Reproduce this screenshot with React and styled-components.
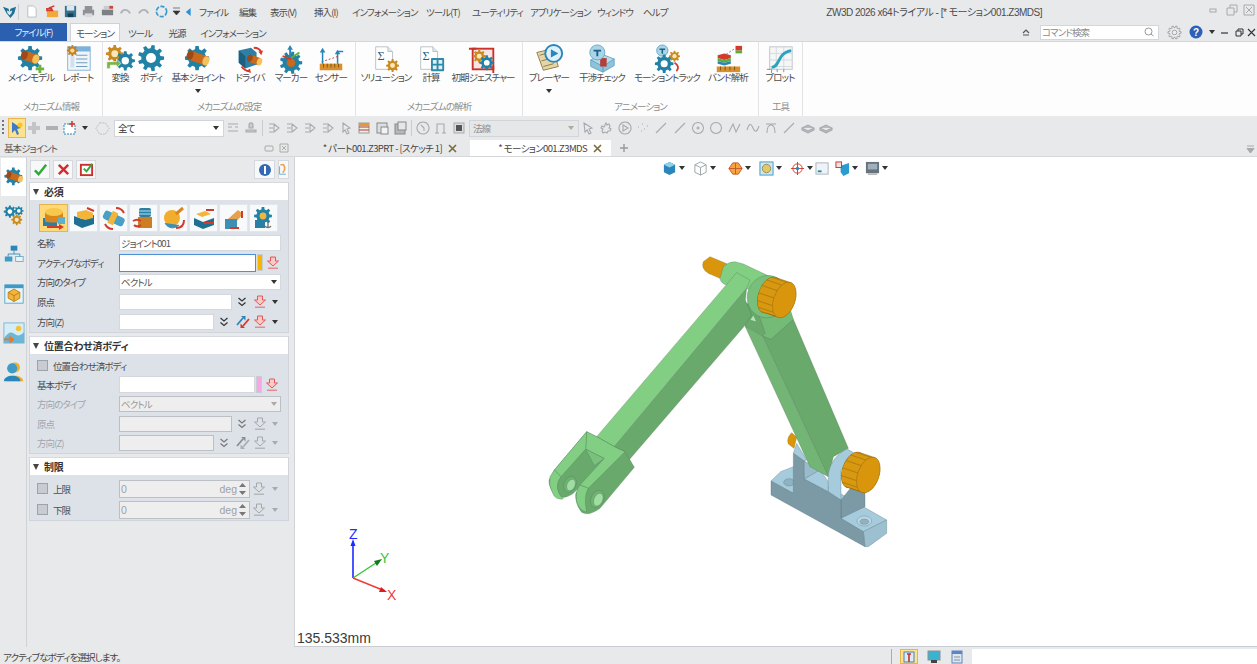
import React from "react";
import styled, { createGlobalStyle } from "styled-components";

const Global = createGlobalStyle`
  html, body { margin: 0; padding: 0; height: 100%; overflow: hidden; }
  body {
    font-family: "Noto Sans CJK JP", "Noto Sans", sans-serif;
    font-feature-settings: "palt";
    font-size: 9.5px;
    letter-spacing: -0.9px;
    color: #4c4c4c;
    background: #e8e9eb;
  }
  svg text { letter-spacing: 0; }
`;

const Page = styled.div`
  width: 1257px;
  height: 664px;
  display: flex;
  flex-direction: column;
  overflow: hidden;
`;

/* ---------- title bar ---------- */
const TitleBar = styled.div`
  height: 23px;
  display: flex;
  align-items: center;
  background: #e8e9eb;
`;
const Quick = styled.div`
  display: flex;
  align-items: center;
  width: 199px;
  flex: none;
`;
const Slot = styled.span`
  width: ${(p) => p.$w || 18}px;
  flex: none;
  display: flex;
  align-items: center;
  justify-content: center;
`;
const MenuBar = styled.nav`
  display: flex;
  white-space: nowrap;
`;
const MenuItem = styled.span`
  width: ${(p) => p.$w}px;
  flex: none;
`;
const WindowTitle = styled.div`
  margin-left: auto;
  margin-right: 215px;
  font-size: 10px;
  letter-spacing: -0.5px;
  white-space: nowrap;
  font-family: "Liberation Sans", "Noto Sans CJK JP", sans-serif;
`;
const WinControls = styled.div`
  position: absolute;
  right: 0;
  top: 4px;
  display: flex;
`;

/* ---------- ribbon tabs ---------- */
const TabStrip = styled.div`
  height: 18px;
  display: flex;
  align-items: stretch;
  background: #e8e9eb;
`;
const FileTab = styled.div`
  width: 67px;
  background: #2b5fb0;
  color: #e6eefa;
  display: flex;
  align-items: center;
  justify-content: center;
  margin-right: 3px;
`;
const RibbonTab = styled.div`
  width: ${(p) => p.$w}px;
  display: flex;
  align-items: center;
  justify-content: center;
  white-space: nowrap;
  background: ${(p) => (p.$active ? "#fdfdfd" : "transparent")};
  border: 1px solid ${(p) => (p.$active ? "#cfd2d6" : "transparent")};
  border-bottom: 0;
  box-sizing: border-box;
`;
const TabTools = styled.div`
  margin-left: auto;
  display: flex;
  align-items: center;
  height: 18px;
`;
const SearchBox = styled.div`
  width: 119px;
  height: 15px;
  background: #fff;
  border: 1px solid #d3d6da;
  display: flex;
  align-items: center;
  justify-content: space-between;
  padding: 0 4px 0 1px;
  box-sizing: border-box;
  color: #8a8a8a;
  margin: 0 6px 0 9px;
`;

/* ---------- ribbon ---------- */
const Ribbon = styled.div`
  height: 74px;
  display: flex;
  background: #fdfdfd;
  border-top: 1px solid #d3d6da;
  border-bottom: 1px solid #c5c9ce;
  box-sizing: content-box;
  margin-bottom: -1px;
`;
const Group = styled.section`
  width: ${(p) => p.$w}px;
  flex: none;
  box-sizing: border-box;
  border-right: 1px solid #e2e4e7;
  display: flex;
  flex-direction: column;
  padding-left: ${(p) => p.$pad}px;
`;
const GroupButtons = styled.div`
  display: flex;
  flex: 1;
`;
const GroupLabel = styled.div`
  height: 17px;
  margin-left: ${(p) => -p.$pad}px;
  text-align: center;
  color: #8d8d8d;
  line-height: 15px;
`;
const RibbonButton = styled.div`
  width: ${(p) => p.$w}px;
  flex: none;
  display: flex;
  flex-direction: column;
  align-items: center;
  padding-top: 2px;
  white-space: nowrap;
  line-height: 13px;
  svg { margin-bottom: -3px; }
`;
const Caret = styled.i`
  display: block;
  width: 0;
  height: 0;
  margin-top: ${(p) => (p.$flat ? 0 : 5)}px;
  border-left: 3px solid transparent;
  border-right: 3px solid transparent;
  border-top: 4px solid ${(p) => p.$c || "#333"};
`;

/* ---------- toolbar ---------- */
const Toolbar = styled.div`
  height: 24px;
  display: flex;
  align-items: center;
  background: #e8e9eb;
  padding-left: 2px;
`;
const Grip = styled.span`
  width: 2px;
  height: 16px;
  margin-right: 4px;
  background: repeating-linear-gradient(#777 0 2px, transparent 2px 4px);
`;
const Selected = styled.span`
  width: 16px;
  height: ${(p) => p.$h || 18}px;
  background: #fde28f;
  border: 1px solid #e9b44c;
  box-sizing: content-box;
  display: flex;
  align-items: center;
  justify-content: center;
  flex: none;
  margin-right: ${(p) => p.$mr || 0}px;
`;
const Combo = styled.div`
  width: ${(p) => p.$w}px;
  height: 17px;
  box-sizing: border-box;
  flex: none;
  background: ${(p) => (p.$off ? "#e6e7e8" : "#fff")};
  border: 1px solid #d2d4d7;
  display: flex;
  align-items: center;
  justify-content: space-between;
  padding: 0 4px 0 3px;
  color: ${(p) => (p.$off ? "#8f8f8f" : "#333")};
  margin-left: ${(p) => p.$ml || 0}px;
`;
const Sep = styled.span`
  width: 1px;
  height: 16px;
  background: #c8cbcf;
  margin: 0 ${(p) => p.$m ?? 2}px;
  flex: none;
`;

/* ---------- document tabs ---------- */
const DocRow = styled.div`
  height: 17px;
  display: flex;
  align-items: stretch;
  background: #e8e9eb;
  border-bottom: 1px solid #d6d8db;
  box-sizing: border-box;
`;
const PanelTitle = styled.div`
  width: 290px;
  padding-left: 4px;
  box-sizing: border-box;
  display: flex;
  align-items: center;
  justify-content: space-between;
  color: #555;
  flex: none;
`;
const PanelTitleTools = styled.div`
  display: flex;
  gap: 5px;
  margin-right: 1px;
`;
const DocTab = styled.div`
  width: ${(p) => p.$w}px;
  flex: none;
  margin-left: ${(p) => p.$ml}px;
  background: ${(p) => (p.$active ? "#fff" : "transparent")};
  display: flex;
  align-items: center;
  justify-content: flex-end;
  gap: 6px;
  padding-right: 9px;
  box-sizing: border-box;
  white-space: nowrap;
  letter-spacing: -0.6px;
  color: #444;
`;
const DocTabsEnd = styled.div`
  margin-left: auto;
  padding: 5px 2px 0 0;
`;

/* ---------- main ---------- */
const Main = styled.div`
  flex: 1;
  display: flex;
  min-height: 0;
`;
const SideStrip = styled.aside`
  width: 26px;
  flex: none;
  display: flex;
  flex-direction: column;
  align-items: stretch;
  padding-top: 1px;
  background: #e8e9eb;
  border-right: 1px solid #cfd3d8;
  box-sizing: content-box;
`;
const SideTab = styled.div`
  height: ${(p) => p.$h}px;
  display: flex;
  align-items: center;
  justify-content: center;
  background: ${(p) => (p.$active ? "#fff" : "transparent")};
  margin-left: 1px;
`;
const Panel = styled.div`
  width: 263px;
  flex: none;
  display: flex;
  flex-direction: column;
  padding: 2px 1px 0 2px;
  box-sizing: border-box;
  background: #e8e9eb;
`;
const ActionRow = styled.div`
  display: flex;
  height: 21px;
  gap: 3px;
  align-items: center;
  padding-left: 1px;
  margin-bottom: 2px;
`;
const ActionButton = styled.div`
  width: ${(p) => p.$w || 20}px;
  height: 19px;
  background: #f7f8f9;
  border: 1px solid #d5d8dc;
  box-sizing: border-box;
  display: flex;
  align-items: center;
  justify-content: center;
  margin-left: ${(p) => (p.$auto ? "auto" : "0")};
`;
const Section = styled.section`
  background: #dde2e9;
  border: 1px solid #d0d5db;
  border-top: 0;
  margin-bottom: 3px;
  box-sizing: border-box;
`;
const SectionHead = styled.header`
  height: 18px;
  background: #fff;
  border-top: 1px solid #d6d9dd;
  box-sizing: border-box;
  display: flex;
  align-items: center;
  gap: 5px;
  padding-left: 3px;
  font-weight: 700;
  color: #333;
  font-size: 10px;
  letter-spacing: -0.2px;
`;
const Triangle = styled.i`
  width: 0;
  height: 0;
  border-left: 3.5px solid transparent;
  border-right: 3.5px solid transparent;
  border-top: 6px solid #444;
`;
const SectionBody = styled.div`
  padding: ${(p) => p.$top ?? 2}px 0 ${(p) => p.$bottom ?? 0}px 7px;
`;
const JointRow = styled.div`
  display: flex;
  gap: 1px;
  height: 29px;
  margin-left: 2px;
`;
const JointButton = styled.div`
  width: 29px;
  height: 28px;
  box-sizing: border-box;
  display: flex;
  align-items: center;
  justify-content: center;
  background: ${(p) => (p.$on ? "#fdd97c" : "#f8f9fa")};
  border: 1px solid ${(p) => (p.$on ? "#e9b44c" : "#e4e7ea")};
`;
const Row = styled.div`
  height: ${(p) => p.$h || 19.75}px;
  display: flex;
  align-items: center;
  color: ${(p) => (p.$off ? "#a2a6ab" : "#4c4c4c")};
`;
const FieldLabel = styled.label`
  width: ${(p) => p.$w || 82}px;
  flex: none;
  white-space: nowrap;
`;
const Input = styled.div`
  width: ${(p) => p.$w}px;
  height: ${(p) => p.$hh || 16}px;
  flex: none;
  box-sizing: border-box;
  background: ${(p) => (p.$off ? "#eeeeef" : "#fff")};
  border: 1px solid ${(p) => (p.$focus ? "#4a90d9" : p.$off ? "#bcc0c5" : "#d4d8dd")};
  display: flex;
  align-items: center;
  justify-content: space-between;
  padding: 0 3px 0 1px;
  color: ${(p) => (p.$off ? "#9a9a9a" : "#555")};
`;
const Swatch = styled.span`
  width: 6px;
  height: 17px;
  margin-left: 1px;
  background: ${(p) => p.$c};
  border: 1px solid #c9ccd1;
  box-sizing: border-box;
  flex: none;
`;
const Check = styled.span`
  width: 11px;
  height: 11px;
  box-sizing: border-box;
  background: #c8ccd2;
  border: 1px solid #9ea3a9;
  flex: none;
  margin-right: 5px;
`;
const UnitInput = styled(Input)`
  height: 18px;
  font-family: "Liberation Sans", sans-serif;
  font-size: 10.5px;
  letter-spacing: 0;
  color: #a0a0a0;
`;
const UnitRight = styled.span`
  display: flex;
  align-items: center;
  gap: 2px;
`;

const Canvas = styled.main`
  flex: 1;
  position: relative;
  background: #fff;
  margin-left: 4px;
  border-left: 1px solid #d0d3d7;
  border-bottom: 1px solid #c9ccd0;
  box-sizing: border-box;
`;
const ViewBar = styled.div`
  display: flex;
  justify-content: center;
  align-items: center;
  height: 22px;
`;
const ViewItem = styled.span`
  display: flex;
  align-items: center;
  gap: 2px;
  width: ${(p) => p.$w}px;
`;
const Scale = styled.div`
  position: absolute;
  left: 2px;
  bottom: 0;
  font-family: "Liberation Sans", sans-serif;
  font-size: 14px;
  letter-spacing: 0;
  line-height: 16px;
  color: #3a3a3a;
`;
const ModelLayer = styled.svg`
  position: absolute;
  left: 235px;
  top: 83px;
`;
const AxisLayer = styled.svg`
  position: absolute;
  left: 40px;
  top: 363px;
`;

const StatusBar = styled.footer`
  height: 17px;
  display: flex;
  align-items: flex-end;
  background: #e8e9eb;
  color: #444;
`;
const StatusText = styled.div`
  width: 891px;
  padding-left: 3px;
  box-sizing: border-box;
  flex: none;
  line-height: 14px;
  white-space: nowrap;
`;
const StatusIcons = styled.div`
  width: 81px;
  height: 15px;
  display: flex;
  align-items: center;
  gap: 9px;
  border-left: 1px solid #a9adb2;
  padding-left: 8px;
  box-sizing: border-box;
  flex: none;
`;
const StatusBox = styled.div`
  flex: 1;
  height: 15px;
  background: #fff;
`;

/* ---------- drawing helpers ---------- */
const gearPath = (cx, cy, R, n = 8) => {
  const r = R * 0.74;
  const step = (Math.PI * 2) / n;
  let d = "";
  for (let i = 0; i < n; i++) {
    const a = i * step;
    const pts = [
      [r, a - step * 0.3],
      [R, a - step * 0.18],
      [R, a + step * 0.18],
      [r, a + step * 0.3],
    ];
    pts.forEach(([q, t], k) => {
      const x = (cx + q * Math.cos(t)).toFixed(1);
      const y = (cy + q * Math.sin(t)).toFixed(1);
      d += `${i === 0 && k === 0 ? "M" : "L"}${x} ${y} `;
    });
  }
  return d + "Z";
};
const Gear = ({ x, y, R, c = "#2282a6", hole = "#fff", n = 8 }) => (
  <g>
    <path d={gearPath(x, y, R, n)} fill={c} />
    <circle cx={x} cy={y} r={R * 0.38} fill={hole} />
  </g>
);
const Cyl = ({ x, y, l = 12, r = 4 }) => (
  <g transform={`rotate(20 ${x} ${y})`}>
    <rect x={x - l / 2} y={y - r} width={l} height={r * 2} fill="#c9691e" />
    <ellipse cx={x + l / 2} cy={y} rx={r * 0.7} ry={r} fill="#f3c25a" />
    <ellipse cx={x - l / 2} cy={y} rx={r * 0.7} ry={r} fill="#9c4a17" />
  </g>
);
const S = ({ s = 30, v = 32, children }) => (
  <svg width={s} height={s} viewBox={`0 0 ${v} ${v}`} style={{ display: "block", flex: "none" }}>
    {children}
  </svg>
);
const DocSigma = ({ x = 5 }) => (
  <g>
    <path d={`M${x} 3h13l5 5v19h-18z`} fill="#fff" stroke="#b7c0c8" />
    <path d={`M${x + 13} 3v5h5`} fill="#dfe6ea" stroke="#b7c0c8" />
    <text x={x + 2} y="17" fontSize="13" fontFamily="Liberation Serif, serif" fill="#1f5f86">Σ</text>
  </g>
);

const ribbonIcons = {
  main: (
    <S>
      <Gear x={15} y={15} R={13} hole="#2282a6" />
      <Cyl x={15} y={14} l={13} r={5} />
      <path d="M24 22h3v3h3v3h-3v3h-3v-3h-3v-3h3z" fill="#6fb33f" />
    </S>
  ),
  report: (
    <S>
      <rect x="5" y="3" width="24" height="25" fill="#eef5fb" stroke="#8cb3d3" />
      <rect x="5" y="3" width="24" height="5" fill="#7cb2de" />
      <path d="M14 12h12M14 16h12M14 20h12M14 24h12" stroke="#6c95b5" />
      <rect x="8" y="11" width="4" height="14" fill="#cfe0ee" />
      <Gear x={10} y={7} R={6} c="#c97f1c" hole="#f5d9a0" />
    </S>
  ),
  convert: (
    <S v={34}>
      <Gear x={11} y={11} R={10} c="#c98a1f" hole="#fbe6b5" />
      <Gear x={23} y={19} R={11} />
      <path d="M2 20h11v-3l5 5-5 5v-3H6v4H2z" fill="#7eb24a" stroke="#fff" strokeWidth=".8" />
    </S>
  ),
  body: (
    <S>
      <Gear x={16} y={15} R={14} n={9} />
    </S>
  ),
  joint: (
    <S>
      <Gear x={15} y={15} R={13} hole="#2282a6" />
      <Cyl x={16} y={15} l={18} r={5} />
    </S>
  ),
  driver: (
    <S>
      <path d="M4 7l13-3 6 5v13l-12 4-7-6z" fill="#2d7fa5" />
      <path d="M4 7l7 6v13l-7-6z" fill="#1d5f80" />
      <Cyl x={21} y={17} l={11} r={4} />
      <path d="M20 4c4 0 7 2 8 5M7 24c2 3 5 5 9 5" stroke="#d33a2c" strokeWidth="2" fill="none" />
      <path d="M28 12l2-5-5 1zM17 31l-1-5-4 3z" fill="#d33a2c" />
    </S>
  ),
  marker: (
    <S>
      <Gear x={16} y={20} R={12} n={9} hole="#c9691e" />
      <path d="M15 16V3" stroke="#2a86b8" strokeWidth="2" />
      <path d="M12 6l3-5 3 5z" fill="#2a86b8" />
      <path d="M16 15l9-6" stroke="#5cae3c" strokeWidth="2" />
      <path d="M16 16l-9-3" stroke="#d33a2c" strokeWidth="2" />
    </S>
  ),
  sensor: (
    <S>
      <rect x="4" y="21" width="24" height="7" fill="#d98f2b" />
      <path d="M8 21v4M12 21v4M16 21v4M20 21v4M24 21v4" stroke="#7d5418" />
      <path d="M7 21V6M23 21V8h6" stroke="#2a86b8" strokeWidth="1.6" fill="none" />
      <path d="M4 9l3-5 3 5zM20 11l3-5 3 5z" fill="#2a86b8" />
      <path d="M6 19l18-6" stroke="#d33a2c" strokeDasharray="2 2" />
    </S>
  ),
  solution: (
    <S>
      <DocSigma />
      <Gear x={23} y={23} R={7} c="#c98a1f" hole="#fbe6b5" />
    </S>
  ),
  calc: (
    <S>
      <DocSigma />
      <rect x="16" y="15" width="14" height="14" rx="1" fill="#2e8aa8" />
      <path d="M18 17h4v4h-4zM24 17h4v4h-4zM18 23h4v4h-4zM24 23h4v4h-4z" fill="#dcf0f6" />
    </S>
  ),
  gesture: (
    <S>
      <rect x="5" y="5" width="22" height="22" fill="#f9e5e1" stroke="#c8322a" strokeWidth="2" />
      <path d="M1 5h8M27 23v8" stroke="#c8322a" strokeWidth="2" />
      <Gear x={12} y={13} R={7} c="#c98a1f" hole="#fbe6b5" />
      <Gear x={20} y={20} R={8} />
    </S>
  ),
  player: (
    <S>
      <path d="M3 9l17-4 6 19-16 4z" fill="#e6d6a6" stroke="#8a7a4c" />
      <path d="M6 12l11-3M8 18l11-3M10 24l11-3" stroke="#8a7a4c" />
      <circle cx="21" cy="10" r="9" fill="#dff2fb" stroke="#2a86b8" strokeWidth="2" />
      <path d="M18 5.500l8 4.500-8 4.500z" fill="#2a86b8" />
    </S>
  ),
  check: (
    <S>
      <path d="M4 17l12-6 13 5-12 8z" fill="#b6dcec" stroke="#6aa7c4" />
      <path d="M4 17v7l13 6v-6zM17 24l12-8v7l-12 7z" fill="#8fc3da" stroke="#6aa7c4" />
      <rect x="14" y="15" width="7" height="9" fill="#b33f3a" />
      <circle cx="11" cy="9" r="8" fill="#a9d5e8" stroke="#6aa7c4" />
      <path d="M7 7h8M11 7v6" stroke="#1f5f86" strokeWidth="2" />
    </S>
  ),
  track: (
    <S>
      <circle cx="11" cy="7" r="6" fill="#a9d5e8" stroke="#6aa7c4" />
      <path d="M8 5.500h6M11 5.500v5" stroke="#1f5f86" strokeWidth="1.6" />
      <Gear x={13} y={21} R={10} />
      <Gear x={24} y={13} R={6} c="#c98a1f" hole="#fbe6b5" />
      <path d="M24 20c4 2 5 6 2 9" stroke="#d33a2c" strokeWidth="2" fill="none" />
    </S>
  ),
  band: (
    <S>
      <rect x="4" y="24" width="25" height="6" fill="#d98f2b" />
      <path d="M8 24v4M13 24v4M18 24v4M23 24v4" stroke="#7d5418" />
      <path d="M5 12l7-2 7 2v3l-7 2-7-2z" fill="#d33a2c" />
      <path d="M5 15l7 2 7-2v3l-7 2-7-2z" fill="#5cae3c" />
      <path d="M5 18l7 2 7-2v3l-7 2-7-2z" fill="#2a86b8" />
      <rect x="24" y="2" width="7" height="5" fill="#d33a2c" />
      <rect x="24" y="7" width="7" height="3" fill="#5cae3c" />
      <path d="M14 11l9-6" stroke="#777" strokeDasharray="2 2" />
    </S>
  ),
  plot: (
    <S>
      <rect x="5" y="3" width="24" height="24" fill="#f4f6f7" stroke="#c0c5ca" />
      <path d="M5 10h24M5 17h24M5 24h24M12 3v24M20 3v24" stroke="#d5d9dc" />
      <path d="M7 25c9 0 6-16 21-18" stroke="#2ba3bd" strokeWidth="3" fill="none" />
      <path d="M2 27h4M7 27v4M13 27v3M20 27v3" stroke="#888" />
    </S>
  ),
};

const Pick = ({ off }) => (
  <S s={14} v={14}>
    <path d="M4.500 1h5v4h3L7 10 1.500 5h3z" fill={off ? "#dfe2e5" : "#f9c9c6"} stroke={off ? "#a3a8ad" : "#e0585a"} />
    <path d="M2 11.500h10v1.500H2z" fill={off ? "#b4b8bd" : "#e8898a"} />
  </S>
);
const DoubleDown = ({ off }) => (
  <S s={10} v={10}>
    <path d="M1.500 1l3.500 3 3.500-3M1.500 5.500l3.500 3 3.500-3" stroke={off ? "#777" : "#333"} strokeWidth="1.2" fill="none" />
  </S>
);
const Flip = ({ off }) => (
  <S s={14} v={14}>
    <path d="M1 10L7 3" stroke={off ? "#8a8f94" : "#2a86b8"} strokeWidth="1.8" />
    <path d="M5 1h4.500v4.500z" fill={off ? "#8a8f94" : "#2a86b8"} />
    <path d="M13 4l-6 7" stroke={off ? "#a9aeb3" : "#d33a2c"} strokeWidth="1.8" />
    <path d="M4.500 8.500V13H9z" fill={off ? "#a9aeb3" : "#d33a2c"} />
  </S>
);
const Spin = () => (
  <svg width="7" height="14" viewBox="0 0 7 14" style={{ display: "block" }}>
    <path d="M0 5l3.500-4L7 5zM0 9l3.500 4L7 9z" fill="#777" />
  </svg>
);

const GrayTool = ({ d, fill = "none" }) => (
  <S s={14} v={14}>
    <path d={d} stroke="#a6aaae" strokeWidth="1.1" fill={fill} />
  </S>
);

const jointIcons = [
  <S s={24} v={24} key="0">
    <rect x="1" y="12" width="14" height="8" fill="#2a7fa5" />
    <path d="M3 6v9c0 2 18 2 18 0V6" fill="#d9861f" />
    <ellipse cx="12" cy="6" rx="9" ry="4" fill="#f7c84a" />
    <rect x="16" y="11" width="7" height="7" fill="#5fb0cf" />
    <path d="M5 21h14" stroke="#d33a2c" strokeWidth="2" />
    <path d="M22 21l-5-3v6z" fill="#d33a2c" />
  </S>,
  <S s={24} v={24} key="1">
    <path d="M2 10l8 3v9l-8-4zM10 13l12-4v9l-12 4z" fill="#1f6f93" />
    <path d="M5 6l9-2 7 3v5l-8 2-8-3z" fill="#f2b53a" />
    <path d="M15 2l7 3" stroke="#d33a2c" strokeWidth="2" />
  </S>,
  <S s={24} v={24} key="2">
    <g transform="rotate(25 12 12)">
      <rect x="1" y="8" width="22" height="9" rx="3" fill="#4aa0c4" />
      <rect x="8" y="6" width="6" height="13" fill="#f2b53a" />
    </g>
    <path d="M3 18c2 4 5 5 8 5M14 2c3 0 6 1 8 5" stroke="#d33a2c" strokeWidth="2" fill="none" />
  </S>,
  <S s={24} v={24} key="3">
    <rect x="7" y="2" width="12" height="9" rx="2" fill="#2a7fa5" />
    <path d="M7 5h12M7 8h12" stroke="#bfe0ee" />
    <rect x="6" y="11" width="14" height="11" fill="#cd7d22" />
    <path d="M1 15c3-2 5-2 8 0M9 19c-3 2-5 2-7 0" stroke="#d33a2c" strokeWidth="2" fill="none" />
  </S>,
  <S s={24} v={24} key="4">
    <circle cx="10" cy="12" r="8" fill="#f0ad2e" />
    <path d="M14 8l7-6" stroke="#d9861f" strokeWidth="3" />
    <path d="M3 17c3 6 10 6 14 2" fill="#3d8fb3" stroke="#3d8fb3" />
    <path d="M14 22c5 0 8-3 8-8" stroke="#d33a2c" strokeWidth="2" fill="none" />
  </S>,
  <S s={24} v={24} key="5">
    <path d="M2 12l9 4v7l-9-4zM11 16l11-4v7l-11 4z" fill="#1f6f93" />
    <path d="M4 8l9-3 6 3-9 3z" fill="#f2b53a" />
    <path d="M14 4h8M12 17h10" stroke="#d33a2c" strokeWidth="2" />
  </S>,
  <S s={24} v={24} key="6">
    <path d="M6 13l10-9 5 4-7 8z" fill="#e6a14f" />
    <rect x="3" y="13" width="12" height="10" fill="#3d8fb3" />
    <path d="M17 22h-9M20 12V5" stroke="#d33a2c" strokeWidth="2" />
  </S>,
  <S s={24} v={24} key="7">
    <Gear x={11} y={10} R={9} hole="#f2b53a" />
    <rect x="3" y="14" width="10" height="8" fill="#2a7fa5" />
    <path d="M16 16v6M13 20c1 2 5 2 6 0" stroke="#777" strokeWidth="1.4" fill="none" />
  </S>,
];

/* the assembly is drawn in a 3x grid, so the numbers read off a zoomed view */
const ORANGE = "#d9950c";
const LIGHT = "#82cf84";
const DARK = "#69a96c";
const STEEL = "#7c99a6";
const ICE = "#a6cbdc";

const Knob = ({ x, y }) => {
  const rx = 32;
  const ry = 56;
  const dx = -45;
  const dy = -15;
  const ang = (20 * Math.PI) / 180;
  const rim = (deg, ox = 0, oy = 0) => {
    const t = (deg * Math.PI) / 180;
    const ex = rx * Math.cos(t);
    const ey = ry * Math.sin(t);
    return [x + ex * Math.cos(ang) - ey * Math.sin(ang) + ox, y + ex * Math.sin(ang) + ey * Math.cos(ang) + oy];
  };
  const steps = [1, 0.75, 0.5, 0.25, 0];
  const teeth = [75, 100, 125, 150, 175, 200, 225, 250, 275];
  return (
    <g>
      <ellipse cx={x + dx} cy={y + dy} rx={rx + 1} ry={ry + 1} transform={`rotate(20 ${x + dx} ${y + dy})`} fill="#7a5a10" stroke="none" />
      {steps.map((k) => (
        <ellipse key={k} cx={x + dx * k} cy={y + dy * k} rx={rx} ry={ry} transform={`rotate(20 ${x + dx * k} ${y + dy * k})`} fill="#d8980f" stroke="none" />
      ))}
      {teeth.map((t) => {
        const [ax, ay] = rim(t);
        const [bx, by] = rim(t, dx, dy);
        return <path key={t} d={`M${ax} ${ay}L${bx} ${by}`} stroke="#8a6a12" strokeWidth="1.6" />;
      })}
      <ellipse cx={x} cy={y} rx={rx} ry={ry} transform={`rotate(20 ${x} ${y})`} fill={ORANGE} stroke="#7a5a10" strokeWidth="1" />
    </g>
  );
};

const Model = () => (
  <ModelLayer width="380" height="320" viewBox="0 0 1140 960">
    <g stroke="#4f7a58" strokeWidth="1" strokeLinejoin="round">
      {/* rear pins */}
      <path d="M540 50L592 72 570 115 535 100Q512 85 520 65Z" fill={ORANGE} stroke="#8a6a10" />
      <path d="M785 578Q768 595 775 612L792 625 800 592Z" fill={ORANGE} stroke="#8a6a10" />

      {/* base */}
      <g stroke="#566f7a">
        <path d="M723 723L752 695 790 680 1070 840 1000 875Z" fill={ICE} />
        <path d="M1000 875L1070 840 1070 880 1015 920 1005 920Z" fill="#9cc0d0" />
        <ellipse cx="777" cy="727" rx="16" ry="11" fill="#8fb2c2" />
        <ellipse cx="1003" cy="843" rx="22" ry="15" fill="#b9d8e4" />
        <ellipse cx="1003" cy="845" rx="13" ry="8" fill="#8fb2c2" />
        <path d="M933 780L933 835 1005 800 1005 690Z" fill={STEEL} />
        <path d="M790 640L800 610 830 660 823 663Z" fill={ICE} />
        <path d="M723 723L790 760 790 640 823 663 823 717 895 755 933 780 933 835 1000 875 1005 920 723 765Z" fill={STEEL} />
        <path d="M823 663L823 717 870 690 845 675Z" fill="#98bccc" />
        <path d="M823 717L870 690 895 725 895 755Z" fill={ICE} />
      </g>

      {/* short arm */}
      <path d="M698 288L790 238 955 625 910 650 895 710Z" fill={DARK} />
      <path d="M645 258L698 288 895 710 840 680Z" fill="#72b575" />
      <path d="M650 190L645 258 698 288 706 280 680 200Z" fill={DARK} />
      <path d="M680 200L706 280 698 288 723 298 790 238 778 200Z" fill="#75bb78" />

      {/* base boss goes over the arm tip */}
      <path d="M895 755L895 700Q905 650 950 627 965 632 985 650L933 690 933 780Z" fill={ICE} stroke="#566f7a" />

      {/* long arm */}
      <path d="M570 115L580 80Q595 65 615 65L640 72 725 112 690 170 650 145 620 98 590 135Q572 130 570 115Z" fill={LIGHT} />
      <path d="M620 98L660 120 650 145 253 620 200 590Z" fill={LIGHT} />
      <path d="M650 145L646 180 665 225 640 262 297 660 253 620Z" fill={DARK} />
      <path d="M660 240L680 246 670 225Z" fill="#b5e6b5" />
      <ellipse cx="712" cy="170" rx="60" ry="64" transform="rotate(20 712 170)" fill="#78bf7b" />

      {/* clevis */}
      <path d="M170 575L200 590 253 620 285 635 300 660 313 682 210 805Q175 830 155 817 135 790 137 762L145 745 130 760Q100 782 75 765 55 740 57 720L73 690Z" fill={DARK} />
      <path d="M167 627L223 655 193 677Z" fill="#7bc17d" />
      <path d="M170 575L200 590 253 620 285 635 175 745 150 735 223 655 167 627Z" fill={LIGHT} />
      <path d="M170 575L167 627 93 710 73 690Z" fill={LIGHT} />
      <path d="M73 690L93 710Q80 725 82 745 85 765 100 777 75 780 68 760 55 735 60 710Z" fill={LIGHT} />
      <ellipse cx="120" cy="733" rx="18" ry="25" transform="rotate(25 120 733)" fill="#6fb372" />
      <ellipse cx="123" cy="735" rx="12" ry="18" transform="rotate(25 123 735)" fill="#a0dda2" />
      <path d="M150 735L175 745Q160 770 170 815 150 815 140 785 135 755 150 735Z" fill={LIGHT} />
      <ellipse cx="202" cy="777" rx="19" ry="27" transform="rotate(25 202 777)" fill="#6fb372" />
      <ellipse cx="205" cy="779" rx="13" ry="20" transform="rotate(25 205 779)" fill="#a0dda2" />

      <Knob x={763} y={180} />
      <Knob x={1015} y={705} />
    </g>
  </ModelLayer>
);

const Axis = () => (
  <AxisLayer width="90" height="100" viewBox="0 -10 90 100">
    <path d="M18 48V12" stroke="#1c2bff" strokeWidth="1.6" />
    <path d="M18 9l2.500 7h-5z" fill="#1c2bff" />
    <path d="M18 48l26-17" stroke="#37c537" strokeWidth="1.4" />
    <path d="M47 29l-5 7-3-5z" fill="#0f7d1f" />
    <path d="M18 48l32 13" stroke="#f03a3a" strokeWidth="1.4" />
    <path d="M52 62l-8 0 2-5z" fill="#d82020" />
    <g fontFamily="Liberation Sans, sans-serif" fontSize="14">
      <text x="14" y="9" fill="#1c2bff">Z</text>
      <text x="45" y="33" fill="#37c537">Y</text>
      <text x="52" y="70" fill="#f03a3a">X</text>
    </g>
  </AxisLayer>
);

const ribbon = [
  { label: "メカニズム情報", w: 103, pad: 6, items: [["main", "メインモデル", 50], ["report", "レポート", 44]] },
  {
    label: "メカニズムの設定",
    w: 253,
    pad: 4,
    items: [["convert", "変換", 26], ["body", "ボディ", 36], ["joint", "基本ジョイント", 58, true], ["driver", "ドライバ", 46], ["marker", "マーカー", 36], ["sensor", "センサー", 44]],
  },
  { label: "メカニズムの解析", w: 167, pad: 4, items: [["solution", "ソリューション", 52], ["calc", "計算", 38], ["gesture", "初期ジェスチャー", 66]] },
  {
    label: "アニメーション",
    w: 236,
    pad: 4,
    items: [["player", "プレーヤー", 44, true], ["check", "干渉チェック", 62], ["track", "モーショントラック", 68], ["band", "バンド解析", 54]],
  },
  { label: "工具", w: 44, pad: 0, items: [["plot", "プロット", 42]] },
];

const menus = [
  ["ファイル", 40],
  ["編集", 31],
  ["表示(V)", 44],
  ["挿入(I)", 38],
  ["インフォメーション", 74],
  ["ツール(T)", 46],
  ["ユーティリティ", 58],
  ["アプリケーション", 67],
  ["ウィンドウ", 46],
  ["ヘルプ", 30],
];

const toolPaths = [
  "M2 3h4M2 7h4M2 11h4M7 3l5 4-5 4z",
  "M2 3h4M2 7h4M2 11h4M7 3l5 4-5 4z",
  "M2 3h4M2 7h4M2 11h4M7 3l5 4-5 4z",
  "M2 3h4M2 7h4M2 11h4M7 3l5 4-5 4z",
  "M4 2l7 5-3 1 2 4-2 1-2-4-2 2z",
];
const lineTools = [
  "M3 2l8 5-3 1 2 4-2 1-2-4-2 2z",
  "M7 2l1 2 2-1 1 2-1 2 2 1-1 2-2 0-1 2-2-1-2 1-1-2 1-2-2-1 1-2 2 1z",
  "M7 1a6 6 0 1 0 .01 0zM5 4l5 3-5 3z",
  "M2 6h1M6 3h1M11 5h1M8 8h1M5 10h1",
  "M2 12L12 2",
  "M2 12L12 2M6 8l2-2",
  "M7 1.500a5.500 5.500 0 1 0 .01 0zM7 6a1 1 0 1 0 .01 0z",
  "M7 1.500a5.500 5.500 0 1 0 .01 0z",
  "M1 11l4-8 3 8 4-8",
  "M1 9c2-7 4-7 6-2s4 4 6-2",
  "M2 3h10M3 12c0-6 2-8 4-8s4 2 4 8",
  "M2 12L12 2",
  "M1 7l6-3 6 3-6 3zM1 7v2l6 3 6-3V7",
  "M1 7l6-3 6 3-6 3zM1 7v2l6 3 6-3V7",
];

const viewIcons = [
  [31, <S key="a" s={15} v={16}><path d="M8 1l6 3v8l-6 3-6-3V4z" fill="#2a86b8" /><path d="M2 4l6 3 6-3-6-3z" fill="#8fd0ea" /></S>],
  [35, <S key="b" s={15} v={16}><path d="M8 1l6 3v8l-6 3-6-3V4zM2 4l6 3 6-3M8 7v8" fill="#fff" stroke="#9aa3a8" /></S>],
  [31, <S key="c" s={15} v={16}><path d="M5 2h6l4 6-4 6H5L1 8z" fill="#f2a93b" stroke="#c9562c" /><path d="M8 2v12M1 8h14" stroke="#c9562c" /></S>],
  [31, <S key="d" s={15} v={16}><rect x="1" y="1" width="14" height="14" fill="#cfe6f2" stroke="#3d9bc6" /><circle cx="8" cy="8" r="4.500" fill="#e6c766" stroke="#8e8e6a" /></S>],
  [25, <S key="e" s={15} v={16}><circle cx="8" cy="8" r="5" fill="none" stroke="#d33a2c" /><path d="M8 1v14M1 8h14" stroke="#d33a2c" /><circle cx="8" cy="8" r="1.800" fill="#2a86b8" /></S>],
  [20, <S key="f" s={15} v={16}><rect x="1" y="2" width="13" height="12" fill="#edf3f6" stroke="#aab3b8" /><rect x="3" y="10" width="4" height="2" fill="#2a86b8" /></S>],
  [30, <S key="g" s={15} v={16}><path d="M6 5l9-3v11l-6 3-3-4z" fill="#2a9ccf" /><rect x="1" y="1" width="6" height="6" fill="#f1e1df" stroke="#c9302c" /></S>],
  [26, <S key="h" s={15} v={16}><rect x="1" y="1" width="14" height="12" fill="#66727c" /><rect x="3" y="3" width="10" height="6" fill="#9fb0bc" /><rect x="3" y="13" width="10" height="2" fill="#b9bcbf" /></S>],
];

export default function App() {
  return (
    <Page>
      <Global />
      <TitleBar>
        <Quick>
          <Slot $w={18}>
            <S s={15} v={16}>
              <path d="M1 3l6 2 1 4 1-4 6-2-2 7-4 5-4-5z" fill="#1f6f93" />
              <path d="M5 7l3 1 3-1-1 3-2 2-2-2z" fill="#d7e3ea" />
            </S>
          </Slot>
          <Sep $m={0} />
          <Slot $w={24}><S s={13} v={14}><path d="M3 1h6l3 3v9H3z" fill="#fff" stroke="#b9bcc0" /></S></Slot>
          <Slot $w={18}>
            <S s={15} v={16}>
              <path d="M2 7h12v7H2z" fill="#f2a93b" />
              <path d="M2 5h5l1 2H2zM10 2l-5 2 2 2" fill="none" stroke="#d33a2c" strokeWidth="1.6" />
            </S>
          </Slot>
          <Slot $w={18}><S s={15} v={16}><path d="M2 2h12v12H2z" fill="#36708f" /><path d="M4 2h8v5H4z" fill="#dce8ef" /><path d="M5 10h6v4H5z" fill="#173f55" /></S></Slot>
          <Slot $w={19}><S s={15} v={16}><path d="M4 2h8v4H4zM2 6h12v6H2z" fill="#8e9296" /><path d="M4 10h8v4H4z" fill="#d8dadc" /></S></Slot>
          <Slot $w={18}><S s={15} v={16}><path d="M2 6h12v6H2z" fill="#7d8185" /><path d="M4 2h8v4H4z" fill="#c9cbcd" /><path d="M10 2h4v3h-4z" fill="#c64b3d" /></S></Slot>
          <Slot $w={18}><S s={13} v={14}><path d="M2 9c2-5 7-5 10 0" stroke="#b0b3b6" strokeWidth="2" fill="none" /></S></Slot>
          <Slot $w={18}><S s={13} v={14}><path d="M2 9c3-5 8-5 10 0" stroke="#b0b3b6" strokeWidth="2" fill="none" /></S></Slot>
          <Slot $w={18}><S s={15} v={16}><circle cx="8" cy="8" r="5.500" fill="none" stroke="#3b9ad0" strokeWidth="1.8" strokeDasharray="4.500 1.500" /></S></Slot>
          <Slot $w={13}><S s={9} v={9}><path d="M1 1h7M1 4h7L4.500 8z" fill="#333" stroke="#333" strokeWidth=".6" /></S></Slot>
          <Slot $w={12}><S s={8} v={10}><path d="M7 0v10L1 5z" fill="#2a90d8" /></S></Slot>
        </Quick>
        <MenuBar>
          {menus.map(([m, w]) => <MenuItem key={m} $w={w}>{m}</MenuItem>)}
        </MenuBar>
        <WindowTitle>ZW3D 2026 x64トライアル - [* モーション001.Z3MDS]</WindowTitle>
        <WinControls>
          <Slot $w={19}><S s={10} v={10}><rect x="2" y="4" width="6" height="3" fill="none" stroke="#aaa" /></S></Slot>
          <Slot $w={19}><S s={12} v={12}><path d="M1 4h7v7H1zM4 4V1h7v7H8" fill="none" stroke="#aaa" /></S></Slot>
          <Slot $w={16}><S s={12} v={12}><path d="M1 1h10v10H1zM3 3l6 6M9 3l-6 6" fill="none" stroke="#aaa" /></S></Slot>
        </WinControls>
      </TitleBar>

      <TabStrip>
        <FileTab>ファイル(F)</FileTab>
        <RibbonTab $w={50} $active>モーション</RibbonTab>
        <RibbonTab $w={40}>ツール</RibbonTab>
        <RibbonTab $w={34}>光源</RibbonTab>
        <RibbonTab $w={78}>インフォメーション</RibbonTab>
        <TabTools>
          <S s={10} v={10}><path d="M2 6l3-3 3 3M2 8h6" stroke="#555" strokeWidth="1.2" fill="none" /></S>
          <SearchBox>
            コマンド検索
            <S s={10} v={10}><circle cx="4.500" cy="4.500" r="3.500" fill="none" stroke="#999" /><path d="M7 7l2.500 2" stroke="#999" /></S>
          </SearchBox>
          <Slot $w={18}><S s={15} v={16}><path d={gearPath(8, 8, 7, 10)} fill="#eceeef" stroke="#9da1a5" /><circle cx="8" cy="8" r="2.500" fill="none" stroke="#9da1a5" /></S></Slot>
          <Slot $w={26}>
            <S s={14} v={14}>
              <circle cx="7" cy="7" r="6.500" fill="#2c5fb8" />
              <text x="4" y="11" fontSize="10" fontWeight="700" fill="#fff" fontFamily="Liberation Sans">?</text>
            </S>
          </Slot>
          <Caret $flat />
          <Slot $w={18}><S s={9} v={9}><path d="M1 5h7" stroke="#333" strokeWidth="1.2" /></S></Slot>
          <Slot $w={12}><S s={9} v={9}><path d="M1 3h5v5H1zM3 3V1h5v5H6" stroke="#333" fill="none" /></S></Slot>
          <Slot $w={12}><S s={9} v={9}><path d="M1 1l7 7M8 1L1 8" stroke="#333" strokeWidth="1.1" /></S></Slot>
        </TabTools>
      </TabStrip>

      <Ribbon>
        {ribbon.map((g) => (
          <Group key={g.label} $w={g.w} $pad={g.pad}>
            <GroupButtons>
              {g.items.map(([icon, text, w, more]) => (
                <RibbonButton key={text} $w={w}>
                  {ribbonIcons[icon]}
                  {text}
                  {more && <Caret />}
                </RibbonButton>
              ))}
            </GroupButtons>
            <GroupLabel $pad={g.pad}>{g.label}</GroupLabel>
          </Group>
        ))}
      </Ribbon>

      <Toolbar>
        <Grip />
        <Selected $mr={-1}>
          <S s={14} v={14}>
            <path d="M2 1l9 6-4 1 2 5-2 1-2-5-3 3z" fill="#3b7bc8" />
            <circle cx="10" cy="4" r="2.500" fill="#f4c430" />
          </S>
        </Selected>
        <Slot><S s={14} v={14}><path d="M5 1h4v4h4v4H9v4H5V9H1V5h4z" fill="#c2c5c8" /></S></Slot>
        <Slot><S s={14} v={14}><path d="M1 5h12v4H1z" fill="#aeb1b4" /></S></Slot>
        <Slot><S s={14} v={14}><rect x="1" y="3" width="11" height="10" fill="#fff" stroke="#2a86b8" strokeDasharray="2 1" /><path d="M9 0v6M6 3h6" stroke="#d33a2c" strokeWidth="1.6" /></S></Slot>
        <Slot $w={12}><Caret $flat /></Slot>
        <Slot $w={22}><S s={15} v={16}><path d="M5 2h6l4 6-4 6H5L1 8z" fill="none" stroke="#b8bbbe" strokeDasharray="2 1" /></S></Slot>
        <Combo $w={110} $ml={1}>全て<Caret $flat /></Combo>
        <Slot><GrayTool d="M2 3h10M2 6h4M9 6h3M2 10h10" /></Slot>
        <Slot><GrayTool d="M5 7V4c0-3 4-3 4 0v3zM2 9h10v2H2z" fill="#c8cbce" /></Slot>
        <Sep />
        {toolPaths.map((d, i) => <Slot key={i}><GrayTool d={d} /></Slot>)}
        <Slot>
          <S s={14} v={14}>
            <rect x="2" y="2" width="10" height="10" fill="#f1efe6" stroke="#999" />
            <rect x="2" y="2" width="10" height="3" fill="#e29b2d" />
            <path d="M2 6h10M2 9h10" stroke="#b53a2c" />
          </S>
        </Slot>
        <Slot><S s={14} v={14}><rect x="2" y="2" width="10" height="10" fill="#dde0e2" stroke="#888" /><rect x="6" y="6" width="7" height="7" fill="#f2f3f4" stroke="#888" /></S></Slot>
        <Slot><S s={14} v={14}><rect x="2" y="3" width="10" height="10" fill="#b5b9bc" stroke="#888" /><rect x="5" y="1" width="8" height="8" fill="#e4e6e8" stroke="#888" /></S></Slot>
        <Sep />
        <Slot><GrayTool d="M7 1a6 6 0 1 0 .01 0zM5 4l3 3v3" /></Slot>
        <Slot><GrayTool d="M3 12V3h7v9M1 12h4M8 12h4" /></Slot>
        <Slot><S s={14} v={14}><rect x="2" y="2" width="10" height="10" fill="#dcdee0" stroke="#aaa" /><rect x="4" y="4" width="6" height="6" fill="#555" /></S></Slot>
        <Combo $w={110} $off $ml={1}>法線<Caret $c="#aaa" $flat /></Combo>
        {lineTools.map((d, i) => <Slot key={i} $w={18.3}><GrayTool d={d} fill={i > 11 ? "#b8bbbe" : "none"} /></Slot>)}
      </Toolbar>

      <DocRow>
        <PanelTitle>
          基本ジョイント
          <PanelTitleTools>
            <S s={10} v={10}><rect x="1" y="3" width="8" height="5" rx="1" fill="none" stroke="#aaa" /></S>
            <S s={10} v={10}><path d="M1 1h8v8H1zM3 3l4 4M7 3L3 7" fill="none" stroke="#aaa" /></S>
          </PanelTitleTools>
        </PanelTitle>
        <DocTab $w={176} $ml={0}>
          * パート001.Z3PRT - [スケッチ 1]
          <S s={9} v={9}><path d="M1 1l7 7M8 1L1 8" stroke="#7d6a3b" strokeWidth="1.6" /></S>
        </DocTab>
        <DocTab $w={141} $ml={4} $active>
          * モーション001.Z3MDS
          <S s={9} v={9}><path d="M1 1l7 7M8 1L1 8" stroke="#7d6a3b" strokeWidth="1.6" /></S>
        </DocTab>
        <Slot $w={26}><S s={10} v={10}><path d="M5 1v8M1 5h8" stroke="#999" strokeWidth="1.4" /></S></Slot>
        <DocTabsEnd>
          <S s={9} v={9}><path d="M1 1h7M1 3.500h7L4.500 8z" fill="#aaa" stroke="#aaa" /></S>
        </DocTabsEnd>
      </DocRow>

      <Main>
        <SideStrip>
          <SideTab $h={38} $active>
            <S s={22} v={32}><Gear x={15} y={15} R={13} hole="#2282a6" /><Cyl x={17} y={16} l={18} r={5} /></S>
          </SideTab>
          <SideTab $h={38}>
            <S s={22} v={32}><Gear x={10} y={11} R={9} /><Gear x={23} y={10} R={7} /><Gear x={20} y={23} R={8} c="#c98a1f" hole="#fbe6b5" /></S>
          </SideTab>
          <SideTab $h={40}>
            <S s={20} v={24}>
              <rect x="8" y="2" width="8" height="6" fill="#2a86b8" />
              <rect x="1" y="15" width="9" height="6" fill="#3d9bc6" />
              <rect x="14" y="15" width="9" height="6" fill="#e9f3f8" stroke="#6aa7c4" />
              <path d="M12 8v4M5 15v-3h14v3" stroke="#2a86b8" fill="none" />
            </S>
          </SideTab>
          <SideTab $h={39}>
            <S s={20} v={24}>
              <rect x="1" y="1" width="22" height="22" fill="#eaf5fa" stroke="#4aa0c4" />
              <rect x="1" y="1" width="22" height="4" fill="#3d9bc6" />
              <path d="M12 6l7 4v7l-7 4-7-4v-7z" fill="#f2b53a" stroke="#b57a13" />
              <path d="M5 10l7 4 7-4M12 14v7" stroke="#b57a13" fill="none" />
            </S>
          </SideTab>
          <SideTab $h={39}>
            <S s={22} v={24}>
              <rect x="1" y="1" width="22" height="22" fill="#d5edf7" stroke="#7db5cf" />
              <circle cx="17" cy="7" r="3" fill="#f4c430" />
              <path d="M1 18c5-8 9-8 13-4 3 2 6 0 9-3v12H1z" fill="#6cb6d6" />
              <path d="M1 19h9M7 16l4 3-4 3" stroke="#e9772b" strokeWidth="2" fill="none" />
            </S>
          </SideTab>
          <SideTab $h={39}>
            <S s={22} v={24}>
              <circle cx="13" cy="7" r="5.500" fill="#f0ad2e" />
              <path d="M4 22c0-8 18-8 18 0z" fill="#f0ad2e" />
              <circle cx="10" cy="8" r="5.500" fill="#3d9bc6" />
              <path d="M1 22c0-8 18-8 18 0z" fill="#2a86b8" />
            </S>
          </SideTab>
        </SideStrip>

        <Panel>
          <ActionRow>
            <ActionButton><S s={15} v={16}><path d="M2 9l4 4 8-10" stroke="#2ea836" strokeWidth="2.600" fill="none" /></S></ActionButton>
            <ActionButton><S s={15} v={16}><path d="M3 3l10 10M13 3L3 13" stroke="#d92b2b" strokeWidth="2.600" /></S></ActionButton>
            <ActionButton>
              <S s={15} v={16}>
                <rect x="2" y="3" width="12" height="11" fill="#fff" stroke="#c9302c" strokeWidth="2" />
                <path d="M5 7l3 3 6-8" stroke="#2ea836" strokeWidth="2" fill="none" />
              </S>
            </ActionButton>
            <ActionButton $w={21} $auto><S s={14} v={14}><circle cx="7" cy="7" r="6" fill="#3169b5" /><rect x="6" y="3" width="2" height="8" fill="#fff" /></S></ActionButton>
            <ActionButton $w={11}><S s={11} v={14}><path d="M3 1h4c2 3 2 7-1 10" stroke="#e7a45b" strokeWidth="2" fill="none" /><path d="M2 3v10h8" stroke="#4aa0c4" fill="none" /></S></ActionButton>
          </ActionRow>

          <Section>
            <SectionHead><Triangle />必須</SectionHead>
            <SectionBody $top={4} $bottom={0.25}>
              <JointRow>
                {jointIcons.map((ic, i) => <JointButton key={i} $on={i === 0}>{ic}</JointButton>)}
              </JointRow>
              <Row>
                <FieldLabel>名称</FieldLabel>
                <Input $w={162}>ジョイント001</Input>
              </Row>
              <Row>
                <FieldLabel>アクティブなボディ</FieldLabel>
                <Input $w={137} $hh={18} $focus />
                <Swatch $c="#f7b500" />
                <Slot $w={20}><Pick /></Slot>
              </Row>
              <Row>
                <FieldLabel>方向のタイプ</FieldLabel>
                <Input $w={162}>ベクトル<Caret $flat /></Input>
              </Row>
              <Row>
                <FieldLabel>原点</FieldLabel>
                <Input $w={113} />
                <Slot $w={20}><DoubleDown /></Slot>
                <Slot $w={16}><Pick /></Slot>
                <Slot $w={14}><Caret $flat /></Slot>
              </Row>
              <Row>
                <FieldLabel>方向(Z)</FieldLabel>
                <Input $w={95} />
                <Slot $w={20}><DoubleDown /></Slot>
                <Slot $w={18}><Flip /></Slot>
                <Slot $w={16}><Pick /></Slot>
                <Slot $w={14}><Caret $flat /></Slot>
              </Row>
            </SectionBody>
          </Section>

          <Section>
            <SectionHead><Triangle />位置合わせ済ボディ</SectionHead>
            <SectionBody>
              <Row $h={19}><Check />位置合わせ済ボディ</Row>
              <Row $h={19.5}>
                <FieldLabel>基本ボディ</FieldLabel>
                <Input $w={136} $hh={17} />
                <Swatch $c="#f7a6e6" />
                <Slot $w={20}><Pick /></Slot>
              </Row>
              <Row $h={19.5} $off>
                <FieldLabel>方向のタイプ</FieldLabel>
                <Input $w={162} $off>ベクトル<Caret $c="#aaa" $flat /></Input>
              </Row>
              <Row $h={19.5} $off>
                <FieldLabel>原点</FieldLabel>
                <Input $w={113} $off />
                <Slot $w={20}><DoubleDown off /></Slot>
                <Slot $w={16}><Pick off /></Slot>
                <Slot $w={14}><Caret $c="#aaa" $flat /></Slot>
              </Row>
              <Row $h={19.5} $off>
                <FieldLabel>方向(Z)</FieldLabel>
                <Input $w={95} $off />
                <Slot $w={20}><DoubleDown off /></Slot>
                <Slot $w={18}><Flip off /></Slot>
                <Slot $w={16}><Pick off /></Slot>
                <Slot $w={14}><Caret $c="#aaa" $flat /></Slot>
              </Row>
            </SectionBody>
          </Section>

          <Section>
            <SectionHead><Triangle />制限</SectionHead>
            <SectionBody $top={3}>
              {["上限", "下限"].map((t) => (
                <Row key={t} $h={21}>
                  <Check />
                  <FieldLabel as="span" $w={66}>{t}</FieldLabel>
                  <UnitInput $w={131} $off>
                    0
                    <UnitRight>deg<Spin /></UnitRight>
                  </UnitInput>
                  <Slot $w={18}><Pick off /></Slot>
                  <Slot $w={14}><Caret $c="#aaa" $flat /></Slot>
                </Row>
              ))}
            </SectionBody>
          </Section>
        </Panel>

        <Canvas>
          <ViewBar>
            {viewIcons.map(([w, icon], i) => (
              <ViewItem key={i} $w={w}>
                {icon}
                {i !== 5 && <Caret $flat />}
              </ViewItem>
            ))}
          </ViewBar>
          <Model />
          <Axis />
          <Scale>135.533mm</Scale>
        </Canvas>
      </Main>

      <StatusBar>
        <StatusText>アクティブなボディを選択します。</StatusText>
        <StatusIcons>
          <Selected $h={13}>
            <S s={12} v={12}><rect x="1" y="1" width="10" height="10" fill="#dceaf6" stroke="#4a7fc0" /><path d="M6 3v8M4 3h4" stroke="#c9302c" strokeWidth="1.6" /></S>
          </Selected>
          <S s={14} v={14}><rect x="1" y="1" width="12" height="9" fill="#3bb2cf" stroke="#8a9298" /><rect x="4" y="10" width="6" height="3" fill="#444" /></S>
          <S s={14} v={14}><rect x="2" y="1" width="10" height="12" fill="#dfe6ee" stroke="#5b86c0" /><rect x="2" y="1" width="10" height="3" fill="#5b86c0" /><path d="M4 7h6M4 10h6" stroke="#8a9298" /></S>
        </StatusIcons>
        <StatusBox />
      </StatusBar>
    </Page>
  );
}
